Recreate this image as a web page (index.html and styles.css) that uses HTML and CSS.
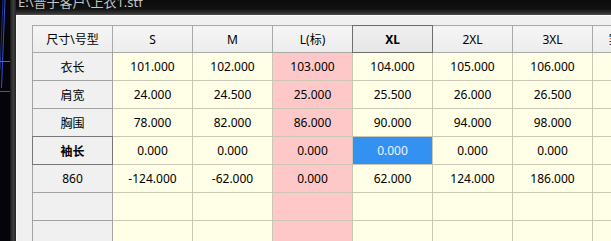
FILE: index.html
```html
<!DOCTYPE html>
<html lang="zh-CN">
<head>
<meta charset="UTF-8" />
<title>号型规格表</title>
<link rel="stylesheet" href="styles.css">
</head>
<body>
<div class="screen">
  <!-- desktop edge + window frame on the left -->
  <div class="edge">
    <svg width="16" height="241" viewBox="0 0 16 241">
      <rect x="0" y="0" width="10" height="241" fill="#04040a" />
      <line x1="5" y1="0" x2="1.5" y2="88" stroke="#3550c8" stroke-width="1" />
      <line x1="3" y1="0" x2="0" y2="70" stroke="#1e2e80" stroke-width="1" />
      <line x1="0" y1="61.5" x2="10" y2="61.5" stroke="#6a6a6a" />
      <line x1="0" y1="91.5" x2="10" y2="91.5" stroke="#5a5a5a" />
      <rect x="10" y="0" width="6" height="241" fill="url(#frame)" />
      <defs>
        <linearGradient id="frame" x1="0" x2="1" y1="0" y2="0">
          <stop offset="0" stop-color="#161616" />
          <stop offset="0.5" stop-color="#3e3e3e" />
          <stop offset="1" stop-color="#262626" />
        </linearGradient>
      </defs>
    </svg>
  </div>

  <div class="window">
    <div class="titlebar"><span class="title">E:\普子客户\上衣1.stf</span></div>
    <div class="client">
      <table class="grid">
        <tr class="head">
          <th class="corner">尺寸\号型</th>
          <th>S</th>
          <th>M</th>
          <th>L(标)</th>
          <th class="sel">XL</th>
          <th>2XL</th>
          <th>3XL</th>
          <th>实际尺寸</th>
        </tr>
        <tr>
          <th class="rowhead">衣长</th>
          <td>101.000</td><td>102.000</td><td class="std">103.000</td><td>104.000</td><td>105.000</td><td>106.000</td><td>107.000</td>
        </tr>
        <tr>
          <th class="rowhead">肩宽</th>
          <td>24.000</td><td>24.500</td><td class="std">25.000</td><td>25.500</td><td>26.000</td><td>26.500</td><td></td>
        </tr>
        <tr>
          <th class="rowhead">胸围</th>
          <td>78.000</td><td>82.000</td><td class="std">86.000</td><td>90.000</td><td>94.000</td><td>98.000</td><td></td>
        </tr>
        <tr>
          <th class="rowhead sel">袖长</th>
          <td>0.000</td><td>0.000</td><td class="std">0.000</td><td class="focus">0.000</td><td>0.000</td><td>0.000</td><td></td>
        </tr>
        <tr>
          <th class="rowhead">860</th>
          <td>-124.000</td><td>-62.000</td><td class="std">0.000</td><td>62.000</td><td>124.000</td><td>186.000</td><td></td>
        </tr>
        <tr>
          <th class="rowhead"></th>
          <td></td><td></td><td class="std"></td><td></td><td></td><td></td><td></td>
        </tr>
        <tr>
          <th class="rowhead"></th>
          <td></td><td></td><td class="std"></td><td></td><td></td><td></td><td></td>
        </tr>
      </table>
    </div>
  </div>
</div>
</body>
</html>
```

FILE: styles.css
```css
html, body {
  margin: 0;
  padding: 0;
  background: #050505;
  overflow: hidden;
}

.screen {
  display: flex;
  width: 611px;
  height: 241px;
  overflow: hidden;
  font-family: "Noto Sans", "Noto Sans CJK SC", sans-serif;
  font-size: 12px;
  color: #000;
}

.edge {
  flex: 0 0 16px;
}
.edge svg {
  display: block;
}

.window {
  flex: 1;
  display: flex;
  flex-direction: column;
  min-width: 0;
}

/* dark title bar, text is cut off by the top of the screenshot */
.titlebar {
  height: 15px;
  overflow: hidden;
  padding-left: 2px;
  background: linear-gradient(to bottom, #0b0b0b 0, #111 9px, #3a3a3a 14px, #5a5a5a 15px);
}
.titlebar .title {
  display: block;
  margin-top: -5px;
  font-size: 13px;
  line-height: 15px;
  color: #c4c4c4;
  white-space: nowrap;
}

.client {
  flex: 1;
  background: #f0f0f0;
  border-top: 1px solid #fbfbfb;
  border-left: 1px solid #fafafa;
  padding: 9px 0 0 15px;
  overflow: hidden;
}

/* grid */
.grid {
  border-collapse: collapse;
  table-layout: fixed;
  width: 641px;
}
.grid th,
.grid td {
  width: 79px;
  height: 27px;
  padding: 0;
  text-align: center;
  font-weight: normal;
  white-space: nowrap;
  overflow: hidden;
}
.grid td {
  background: #fffee6;
  border: 1px solid #cbc7b4;
}
.grid td.std {
  background: #ffc8c8;
}
.grid td.focus {
  background: #3392f1;
  color: #eaf4ff;
}

.grid .head th {
  height: 26px;
  background: linear-gradient(to bottom, #f6f6f6, #ececec);
  border: 1px solid #a9a9a9;
}
.grid th.rowhead {
  background: #f0f0f0;
  border: 1px solid #a3a3a3;
}

/* current row / column header */
.grid th.sel {
  font-weight: bold;
  border: 1px double #777;
}
.grid .head th.sel {
  background: linear-gradient(to bottom, #f0f0f0, #e6e6e6);
  border: 1px double #6e6e6e;
}
```
